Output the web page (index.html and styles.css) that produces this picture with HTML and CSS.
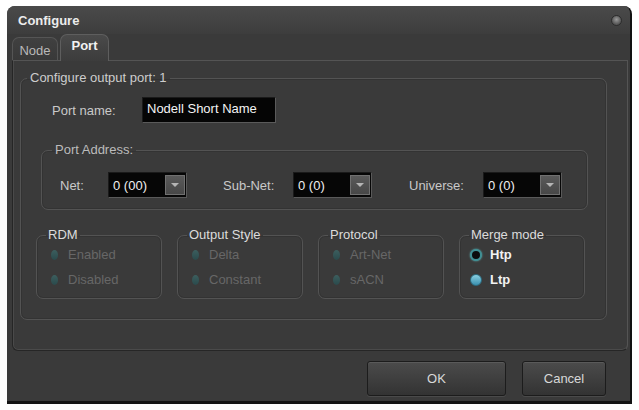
FILE: index.html
```html
<!DOCTYPE html>
<html lang="en">

<head>
  <meta charset="UTF-8">
  <meta name="viewport" content="width=device-width, initial-scale=1.0">
  <title>Configure</title>
  <link rel="stylesheet" href="styles.css">
</head>

<body>
  <div class="window">
    <div class="titlebar">
      <span class="title">Configure</span>
      <span class="close"></span>
    </div>
    <div class="tabs">
      <div class="tab">Node</div>
      <div class="tab active">Port</div>
    </div>
    <div class="panel">
      <fieldset class="group outer">
        <legend>Configure output port: 1</legend>
        <div class="name-row">
          <label class="label name-label" for="portName">Port name:</label>
          <div class="text-field" id="portName">Nodell Short Name</div>
        </div>
        <fieldset class="group address">
          <legend>Port Address:</legend>
          <div class="address-row">
            <span class="label net-label">Net:</span>
            <div class="select">
              <span class="value">0 (00)</span>
              <span class="arrow"></span>
            </div>
            <span class="label subnet-label">Sub-Net:</span>
            <div class="select">
              <span class="value">0 (0)</span>
              <span class="arrow"></span>
            </div>
            <span class="label universe-label">Universe:</span>
            <div class="select">
              <span class="value">0 (0)</span>
              <span class="arrow"></span>
            </div>
          </div>
        </fieldset>
        <div class="options">
          <fieldset class="group option disabled">
            <legend>RDM</legend>
            <div class="radio"><span class="dot"></span>Enabled</div>
            <div class="radio"><span class="dot"></span>Disabled</div>
          </fieldset>
          <fieldset class="group option disabled">
            <legend>Output Style</legend>
            <div class="radio"><span class="dot"></span>Delta</div>
            <div class="radio"><span class="dot"></span>Constant</div>
          </fieldset>
          <fieldset class="group option disabled">
            <legend>Protocol</legend>
            <div class="radio"><span class="dot"></span>Art-Net</div>
            <div class="radio"><span class="dot"></span>sACN</div>
          </fieldset>
          <fieldset class="group option">
            <legend>Merge mode</legend>
            <div class="radio"><span class="dot ring"></span>Htp</div>
            <div class="radio"><span class="dot filled"></span>Ltp</div>
          </fieldset>
        </div>
      </fieldset>
    </div>
    <div class="footer">
      <button class="button ok">OK</button>
      <button class="button cancel">Cancel</button>
    </div>
  </div>
</body>

</html>
```

FILE: styles.css
```css
html,
body {
  margin: 0;
  padding: 0;
  background-color: #ffffff;
  font-family: "Liberation Sans", Arial, sans-serif;
  font-size: 13px;
  color: #cfcfcf;
}

* {
  box-sizing: border-box;
}

.window {
  margin: 6px 0 0 7px;
  width: 625px;
  height: 398px;
  background-color: #3a3a3a;
  border-right: 2px solid #121212;
  border-bottom: 3px solid #141414;
  border-radius: 8px 8px 0 0;
  overflow: hidden;
}

.titlebar {
  display: flex;
  align-items: center;
  justify-content: space-between;
  height: 28px;
  padding: 0 8px 0 11px;
  background: linear-gradient(#4a4a4a, #3d3d3d);
}

.title {
  color: #ececec;
  font-weight: bold;
  font-size: 13px;
}

.close {
  width: 11px;
  height: 11px;
  border-radius: 50%;
  background: radial-gradient(circle at 50% 40%, #9a9a9a, #5c5c5c 60%, #444 100%);
  border: 1px solid #2c2c2c;
}

.tabs {
  display: flex;
  align-items: flex-end;
  height: 26px;
  padding-left: 5px;
}

.tab {
  height: 23px;
  width: 46px;
  display: flex;
  align-items: center;
  justify-content: center;
  padding-top: 2px;
  color: #b9b9b9;
  background: linear-gradient(#404040, #393939);
  border: 1px solid #555;
  border-bottom: none;
  border-radius: 7px 7px 0 0;
}

.tab.active {
  height: 27px;
  width: 49px;
  margin-left: 2px;
  margin-bottom: -1px;
  padding-top: 0;
  padding-bottom: 5px;
  color: #f2f2f2;
  font-weight: bold;
  background: linear-gradient(#4a4a4a, #3c3c3c);
  border-color: #5e5e5e;
  position: relative;
}

.panel {
  margin-left: 5px;
  width: 616px;
  height: 291px;
  border: 1px solid #545454;
  border-left-color: #262626;
  border-bottom-color: #262626;
  border-radius: 0 0 6px 6px;
  box-shadow: inset 1px 0 0 #4a4a4a, inset 0 -1px 0 #4a4a4a;
  padding: 10px 0 0 7px;
}

.group {
  margin: 0;
  min-width: 0;
  border: 1px solid #535353;
  border-radius: 7px;
  box-shadow: inset 0 0 0 1px #333;
}

.group legend {
  margin-left: 6px;
  padding: 0 3px;
  line-height: 14px;
  color: #cdcdcd;
}

.outer {
  width: 587px;
  padding: 12px 0 20px 0;
}

.label {
  color: #c9c9c9;
}

.name-row {
  display: flex;
  align-items: center;
  height: 26px;
  padding-left: 31px;
}

.name-label {
  width: 90px;
}

.text-field {
  width: 134px;
  height: 26px;
  padding: 3px 4px;
  background-color: #050505;
  border: 1px solid #1a1a1a;
  border-right-color: #5a5a5a;
  border-bottom-color: #5a5a5a;
  color: #f4f4f4;
}

.address {
  margin: 20px 18px 0 20px;
  padding: 15px 0 11px 0;
}

.address legend {
  margin-left: 10px;
  color: #bcbcbc;
}

.address-row {
  display: flex;
  align-items: center;
  height: 26px;
  padding-left: 18px;
}

.net-label {
  width: 48px;
}

.subnet-label {
  width: 70px;
  margin-left: 36px;
}

.universe-label {
  width: 74px;
  margin-left: 37px;
}

.select {
  display: flex;
  align-items: center;
  justify-content: space-between;
  width: 79px;
  height: 26px;
  padding: 0 1px 0 4px;
  background-color: #060606;
  border: 1px solid #1a1a1a;
  border-right-color: #595959;
  border-bottom-color: #595959;
  color: #f0f0f0;
}

.arrow {
  position: relative;
  width: 20px;
  height: 20px;
  background: linear-gradient(#5a5a5a, #474747);
  border: 1px solid #707070;
}

.arrow::after {
  content: "";
  position: absolute;
  left: 5px;
  top: 7px;
  border-left: 4px solid transparent;
  border-right: 4px solid transparent;
  border-top: 4px solid #b5b5b5;
}

.options {
  display: flex;
  gap: 15px;
  margin: 18px 0 0 15px;
}

.option {
  width: 126px;
  padding: 0 0 6px 10px;
}

.option legend {
  margin-left: -1px;
  padding: 0 2px;
  color: #dcdcdc;
}

.radio {
  display: flex;
  align-items: center;
  height: 25px;
  color: #f2f2f2;
  font-weight: bold;
}

.disabled .radio {
  color: #676767;
  font-weight: normal;
}

.dot {
  width: 7px;
  height: 10px;
  margin: 0 10px 0 4px;
  border-radius: 50%;
  background: linear-gradient(#3c5e5e, #2a4a4c);
}

.dot.ring,
.dot.filled {
  width: 12px;
  height: 12px;
  margin: 0 8px 0 0;
  border-radius: 50%;
}

.dot.ring {
  background: #0c0c0c;
  border: 2px solid #3f8f93;
  box-shadow: 0 0 2px #5fb2b6;
}

.dot.filled {
  background: linear-gradient(#8ad0e2, #3a8fae);
  border: 1px solid #2c6c80;
}

.footer {
  display: flex;
  justify-content: flex-end;
  gap: 16px;
  padding: 10px 24px 0 0;
}

.button {
  height: 35px;
  border: 1px solid #1c1c1c;
  border-radius: 3px;
  background: linear-gradient(#4b4b4b, #333333);
  box-shadow: inset 0 1px 0 #5a5a5a, 0 1px 0 #4a4a4a;
  color: #d8d8d8;
  font-family: "Liberation Sans", Arial, sans-serif;
  font-size: 13px;
  cursor: pointer;
}

.ok {
  width: 139px;
}

.cancel {
  width: 84px;
}
```
